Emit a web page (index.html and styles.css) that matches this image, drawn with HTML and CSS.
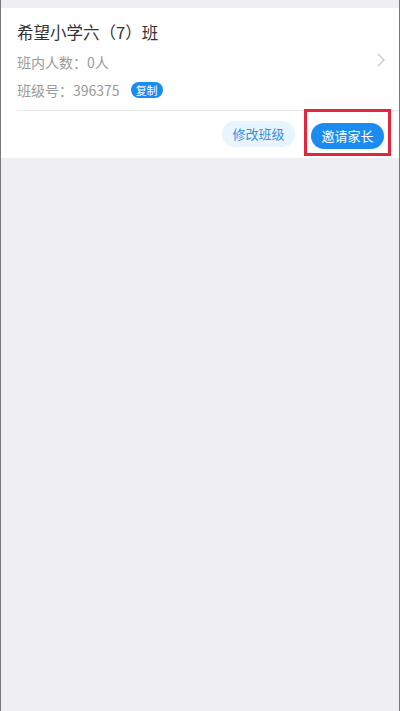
FILE: index.html
```html
<!DOCTYPE html>
<html lang="zh">
<head>
<meta charset="utf-8">
<link rel="stylesheet" href="styles.css">
</head>
<body>
<div class="frame">
  <div class="card">
    <div class="info">
      <div class="texts">
        <div class="title">希望小学六（7）班</div>
        <div class="line">班内人数：0人</div>
        <div class="line code">班级号：396375 <span class="badge">复制</span></div>
      </div>
      <svg class="chev" width="10" height="16" viewBox="0 0 10 16"><path d="M2 2 L8 8 L2 14" fill="none" stroke="#c8c8c8" stroke-width="1.3"/></svg>
    </div>
    <div class="divider"></div>
    <div class="actions">
      <span class="btn light">修改班级</span>
      <span class="hl"><span class="btn primary">邀请家长</span></span>
    </div>
  </div>
</div>
</body>
</html>
```

FILE: styles.css
```css
html, body { margin: 0; padding: 0; }
body {
  width: 400px; height: 711px; overflow: hidden;
  font-family: "Noto Sans CJK SC", "Noto Sans", sans-serif;
}
.frame {
  box-sizing: border-box;
  height: 711px;
  background: #efeef3;
  border-left: 1px solid #7a7878;
  border-right: 1px solid #7a7878;
  padding-top: 8px;
}
.card {
  background: #fff;
  height: 150px;
  box-sizing: border-box;
}
.info {
  display: flex;
  align-items: center;
  padding: 12px 13px 0 16px;
}
.texts { flex: 1; }
.title {
  font-size: 16.5px;
  color: #333;
  line-height: 24px;
}
.line {
  font-size: 14px;
  color: #9a9a9a;
  line-height: 20px;
  margin-top: 8px;
}
.code { display: flex; align-items: center; }
.badge {
  display: inline-block;
  background: #1a8cf0;
  color: #fff;
  font-size: 11px;
  line-height: 16px;
  padding: 0 5px;
  border-radius: 8px;
  margin-left: 11px;
}
.divider {
  height: 1px;
  background: #e6e6e6;
  margin: 10px 0 0 16px;
}
.actions {
  display: flex;
  justify-content: flex-end;
  align-items: center;
  padding-right: 8px;
}
.btn {
  display: inline-block;
  width: 73px;
  height: 26px;
  line-height: 26px;
  text-align: center;
  border-radius: 13px;
  font-size: 13px;
}
.light { background: #e8f4fe; color: #3b8fda; }
.primary { background: #1a8cf0; color: #fff; }
.hl {
  border: 3px solid #e2263e;
  padding: 10px 4px 4px 4px;
  margin-left: 9px;
  margin-top: -2px;
}
```
